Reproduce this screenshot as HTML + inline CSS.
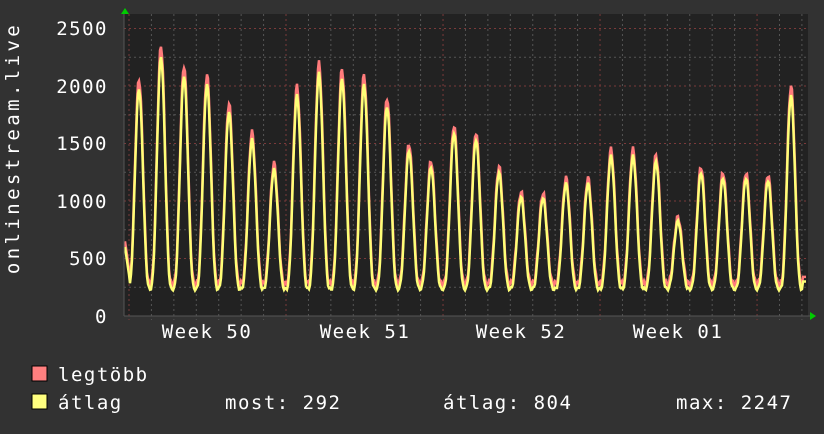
<!DOCTYPE html><html><head><meta charset="utf-8"><style>
body{margin:0;background:#333;width:824px;height:430px;overflow:hidden;font-family:"DejaVu Sans Mono","Liberation Mono",monospace;}
</style></head><body>
<svg id="s" width="824" height="430" xmlns="http://www.w3.org/2000/svg" font-family="DejaVu Sans Mono, Liberation Mono, monospace" font-size="19" fill="#fff">
<rect x="0" y="0" width="824" height="430" fill="#323232"/>
<rect x="124" y="14" width="684" height="302" fill="#222"/>
<g id="grid"></g>
<polyline id="mx" fill="none" stroke="#ff7b7b" stroke-width="2.5"/>
<polyline id="av" fill="none" stroke="#ffff77" stroke-width="2.5"/>
<line x1="124" y1="316" x2="812" y2="316" stroke="#555"/>
<line x1="124" y1="12" x2="124" y2="316" stroke="#555"/>
<polygon points="121,14 125,8 129,14" fill="#0c0"/>
<polygon points="810,312 816,316 810,320" fill="#0c0"/>
<g text-anchor="end" letter-spacing="1.5">
<text x="108" y="35">2500</text><text x="108" y="93">2000</text><text x="108" y="150">1500</text>
<text x="108" y="208">1000</text><text x="108" y="265">500</text><text x="108" y="323">0</text>
</g>
<text transform="translate(19,148) rotate(-90)" text-anchor="middle" letter-spacing="3.4">onlinestream.live</text>
<g text-anchor="middle" letter-spacing="1.5">
<text x="207" y="338">Week 50</text><text x="365" y="338">Week 51</text>
<text x="521" y="338">Week 52</text><text x="678" y="338">Week 01</text>
</g>
<rect x="32" y="366" width="15" height="15" fill="#ff7f7f" stroke="#000"/>
<rect x="32" y="394" width="15" height="15" fill="#ffff7f" stroke="#000"/>
<g letter-spacing="1.5">
<text x="58" y="381">legtöbb</text>
<text x="58" y="409">átlag</text>
<text x="225" y="409">most: 292</text>
<text x="443" y="409">átlag: 804</text>
<text x="676" y="409">max: 2247</text>
</g>
</svg>
<script>
var g=document.getElementById('grid'),h='';
for(var v=0;v<=2500;v+=250){var y=316-v*0.115;var maj=v%500==0;
h+='<line x1="124" x2="808" y1="'+y+'" y2="'+y+'" stroke="'+(maj?'#7a3a3a':'#555')+'" stroke-dasharray="2,3"/>';}
for(var x=129;x<808;x+=22.43){var d=Math.round((x-129)/22.43);var maj=d%7==0;
h+='<line y1="14" y2="320" x1="'+x+'" x2="'+x+'" stroke="'+(maj?'#7a3a3a':'#555')+'" stroke-dasharray="2,3"/>';}
g.innerHTML=h;
var P=[[139,2060],[161,2350],[184,2180],[207,2100],[229,1850],[252,1600],[274,1330],[297,2000],[319,2200],[342,2150],[364,2100],[387,1900],[409,1500],[431,1350],[454,1660],[476,1600],[499,1300],[521,1080],[543,1070],[566,1200],[588,1200],[611,1450],[633,1450],[656,1400],[678,860],[701,1300],[723,1250],[746,1250],[768,1230],[791,2000]];
function val(x,k,base){var best=0;for(var i=0;i<P.length;i++){var dx=(x-P[i][0])/22.43;if(Math.abs(dx)<0.5){var f=Math.cos(Math.PI*dx);f=Math.pow(Math.max(0,f),3.2);
var pk=P[i][1]*k;best=Math.max(best,(pk-base)*f);}}
return base+best;}
var a='',b='';
for(var x=125;x<=806;x+=1){var n=Math.sin(x*1.7)*25;
var m=val(x,1,280)+n,v=val(x,0.96,235)+n*0.5;
if(x<130){m=650-(x-125)*60;v=600-(x-125)*60;}
if(x>802){m=340;v=300;}
a+=x+','+(316-m*0.115).toFixed(1)+' ';b+=x+','+(316-v*0.115).toFixed(1)+' ';}
document.getElementById('mx').setAttribute('points',a);
document.getElementById('av').setAttribute('points',b);
</script>
</body></html>
